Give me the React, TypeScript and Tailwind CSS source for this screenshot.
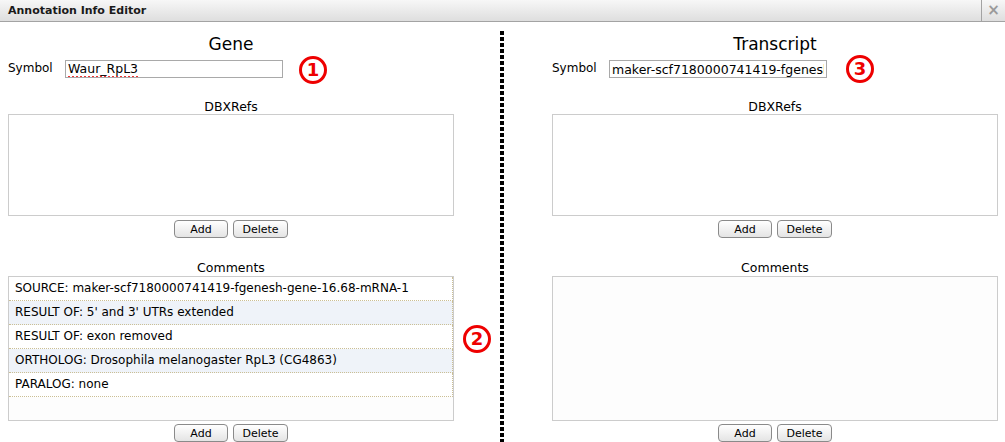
import React from 'react';

const font = { fontFamily: '"DejaVu Sans", Verdana, sans-serif' };

const comments = [
  'SOURCE: maker-scf7180000741419-fgenesh-gene-16.68-mRNA-1',
  "RESULT OF: 5' and 3' UTRs extended",
  'RESULT OF: exon removed',
  'ORTHOLOG: Drosophila melanogaster RpL3 (CG4863)',
  'PARALOG: none',
];

function Buttons() {
  return (
    <div className="flex justify-center gap-[5px] h-[18px]">
      <button className="w-[54px] h-[18px] rounded-[4px] border border-[#8a8a8a] bg-[linear-gradient(#ffffff,#e4e4e4)] text-[11px] text-black leading-none">Add</button>
      <button className="w-[55px] h-[18px] rounded-[4px] border border-[#8a8a8a] bg-[linear-gradient(#ffffff,#e4e4e4)] text-[11px] text-black leading-none">Delete</button>
    </div>
  );
}

function Badge({ n, className }: { n: number; className: string }) {
  return (
    <div className={`absolute w-[28px] h-[28px] rounded-full border-[3px] border-[#ee0000] flex items-center justify-center text-[18px] font-bold text-[#ee0000] leading-none ${className}`}>
      {n}
    </div>
  );
}

function Column({ title, symbol, spell, rows }: { title: string; symbol: string; spell?: boolean; rows?: string[] }) {
  return (
    <div className="w-[446px] flex flex-col">
      <div className="h-[22px] mt-[11px] text-center text-[17px] leading-[22px] text-black">{title}</div>
      <div className="flex items-center h-[18px] mt-[5px]">
        <span className="text-[12px] text-black w-[57px] -mt-[3px]">Symbol</span>
        {spell ? (
          <div className="w-[218px] h-[18px] border border-[#a9a9a9] bg-white px-[2px] text-[12.5px] leading-[16px] text-black overflow-hidden whitespace-nowrap">
            <span className="underline decoration-dotted decoration-[#e33] decoration-2 underline-offset-[3px]">{symbol}</span>
          </div>
        ) : (
          <input
            readOnly
            value={symbol}
            className="w-[218px] h-[18px] border border-[#a9a9a9] bg-white px-[2px] text-[12.5px] leading-[16px] text-black outline-none"
            style={font}
          />
        )}
      </div>
      <div className="mt-[22px] h-[14px] text-center text-[12.5px] leading-[14px] text-black">DBXRefs</div>
      <div className="h-[102px] border border-[#cccccc] bg-white" />
      <div className="mt-[4px]"><Buttons /></div>
      <div className="mt-[22px] h-[16px] text-center text-[12.5px] leading-[16px] text-black">Comments</div>
      <div className="h-[145px] border border-[#cccccc] bg-[#fdfdfd] flex flex-col">
        {(rows || []).map((r, i) => (
          <div
            key={i}
            className={`h-[24px] shrink-0 border-b border-r border-dotted border-[#cbbf95] px-[6px] text-[12px] leading-[23px] text-black whitespace-nowrap ${i % 2 === 1 ? 'bg-[#eff3f9]' : 'bg-white'}`}
          >
            {r}
          </div>
        ))}
      </div>
      <div className="mt-[3px]"><Buttons /></div>
    </div>
  );
}

export default function App() {
  return (
    <div className="relative w-[1005px] h-[442px] bg-white overflow-hidden" style={font}>
      <div className="h-[22px] flex items-stretch border-b border-[#a3a3a3] bg-[linear-gradient(#f7f7f7,#dedede)]">
        <div className="flex-1 pl-[8px] text-[11px] font-bold leading-[21px] text-[#1a1a1a]">Annotation Info Editor</div>
        <div className="w-[24px] border-l border-[#a3a3a3] flex items-center justify-center text-[15px] font-bold text-[#9a9a9a] leading-none">×</div>
      </div>
      <div className="flex pl-[8px]">
        <Column title="Gene" symbol="Waur_RpL3" spell rows={comments} />
        <div className="w-[46px]" />
        <div className="w-[4px] mt-[9px] h-[420px] bg-[repeating-linear-gradient(to_bottom,#000_0px,#000_4px,transparent_4px,transparent_6px)]" />
        <div className="w-[48px]" />
        <Column title="Transcript" symbol="maker-scf7180000741419-fgenesh-gene-16.68-mRNA-1" />
      </div>
      <Badge n={1} className="left-[299px] top-[56px]" />
      <Badge n={2} className="left-[463px] top-[325px]" />
      <Badge n={3} className="left-[846px] top-[55px]" />
    </div>
  );
}
